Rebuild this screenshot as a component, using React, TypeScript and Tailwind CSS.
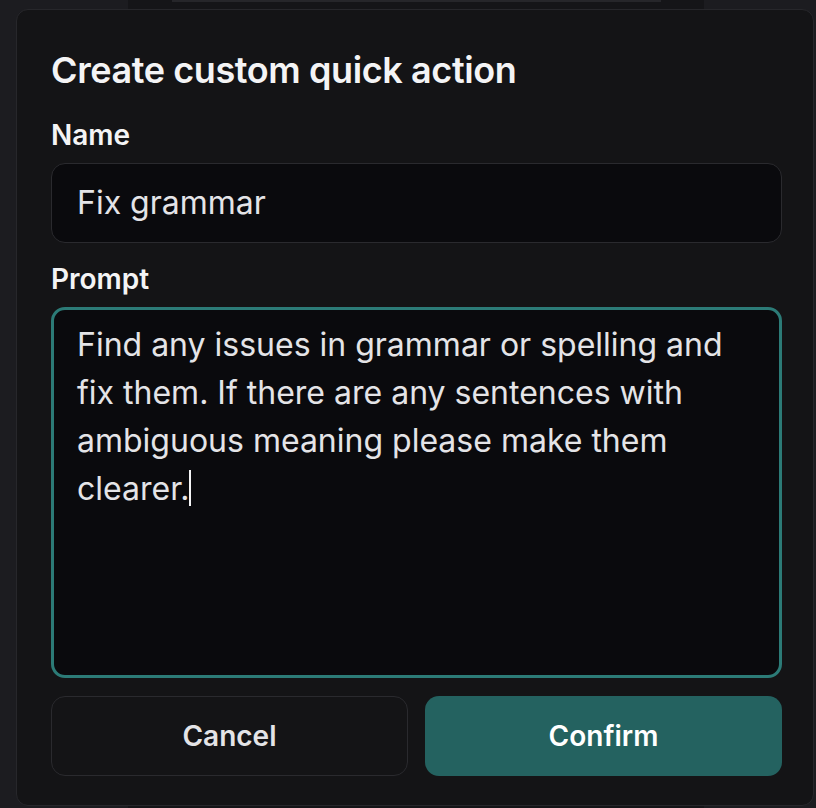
import React from "react";

export default function App() {
  return (
    <div
      className="relative w-[816px] h-[808px] overflow-hidden bg-[#1c1c20]"
      style={{ fontFamily: "Inter, 'Noto Sans', sans-serif" }}
    >
      {/* backdrop panel behind the dialog */}
      <div className="absolute left-[128px] top-0 w-[576px] h-[808px] bg-[#151518]" />
      <div className="absolute left-[172px] top-0 w-[489px] h-[2px] bg-[#26262a]" />

      <div className="relative pt-[9px] pl-[16px]">
        <div className="w-[798px] h-[797px] rounded-[12px] border border-[#27272b] bg-[#141416] pt-[36px] pl-[34px]">
          <div className="w-[731px] flex flex-col">
            <h1 className="text-[36px] leading-[48px] font-semibold text-[#f4f4f5] tracking-[-0.4px]">
              Create custom quick action
            </h1>
            <label className="mt-[21px] text-[28px] leading-[40px] font-semibold text-[#f4f4f5]">
              Name
            </label>
            <div className="mt-[8px] h-[80px] rounded-[14px] border border-[#2a2a2e] bg-[#0a0a0d] flex items-center px-[25px]">
              <span className="text-[32px] leading-[48px] text-[#e4e4e7]">Fix grammar</span>
            </div>
            <label className="mt-[16px] text-[28px] leading-[40px] font-semibold text-[#f4f4f5]">
              Prompt
            </label>
            <div className="mt-[8px] h-[371px] rounded-[14px] border-[3px] border-[#2c7b77] bg-[#0a0a0d] pl-[23px] pr-[20px] pt-[11px]">
              <p className="text-[32px] leading-[48px] text-[#e4e4e7]">
                Find any issues in grammar or spelling and
                <br />
                fix them. If there are any sentences with
                <br />
                ambiguous meaning please make them
                <br />
                clearer.
                <span className="inline-block align-[-6px] w-[2px] h-[36px] bg-[#f4f4f5]" />
              </p>
            </div>
            <div className="mt-[18px] grid grid-cols-2 gap-[17px]">
              <button className="h-[80px] rounded-[14px] border border-[#2a2a2e] bg-[#141416] text-[28px] font-semibold text-[#e4e4e7]">
                Cancel
              </button>
              <button className="h-[80px] rounded-[14px] bg-[#246260] text-[28px] font-semibold text-white">
                Confirm
              </button>
            </div>
          </div>
        </div>
      </div>
    </div>
  );
}
